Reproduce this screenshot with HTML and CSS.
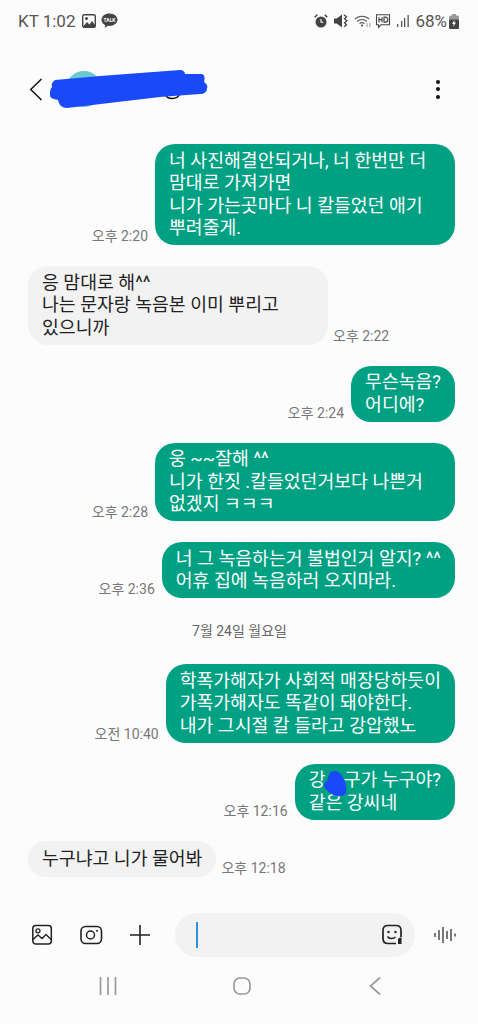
FILE: index.html
```html
<!DOCTYPE html>
<html lang="ko">
<head>
  <meta charset="UTF-8" />
  <meta name="viewport" content="width=device-width, initial-scale=1.0"/>
  <title>메시지</title>
  <link rel="stylesheet" href="styles.css">
</head>
<body>
  <div class="screen">
    <div class="status-bar">
      <div class="status-left">
        <span class="carrier">KT 1:02</span>
        <svg class="ic" width="14" height="14" viewBox="0 0 14 14"><rect x="0.7" y="0.7" width="12.6" height="12.6" rx="1.5" fill="#fff" stroke="#444" stroke-width="1.4"/><circle cx="4.5" cy="4.6" r="1.5" fill="#444"/><path d="M1 12.500 5 8l2.500 2.400L10 7l3 4v2.500H1z" fill="#444"/></svg>
        <svg class="ic talk" width="17" height="16" viewBox="0 0 17 16"><path d="M8.500 0.500C4 0.500 0.500 3.200 0.500 6.800c0 2.400 1.500 4.300 3.800 5.400L3.600 15l3.400-2.200c.5.100 1 .100 1.500.100 4.500 0 8-2.700 8-6.100S13 .5 8.500.5z" fill="#444"/><text x="8.500" y="8.500" text-anchor="middle" font-size="5" font-family="Roboto, sans-serif" font-weight="700" fill="#fff">TALK</text></svg>
      </div>
      <div class="status-right">
        <svg class="ic" width="14" height="14" viewBox="0 0 14 14"><circle cx="7" cy="8" r="5.500" fill="#444"/><path d="M7 5v3.300h2.400" fill="none" stroke="#fff" stroke-width="1.100"/><path d="M.8 3.200 3.200.8M13.200 3.200 10.800.8" stroke="#444" stroke-width="1.600"/></svg>
        <svg class="ic ic-mute" width="14" height="14" viewBox="0 0 14 14"><path d="M0 4.500h2.800L8 .5v13L2.800 9.500H0z" fill="#444"/><path d="M10 .8l2.500 2-2 2 2.500 2-2.500 2 2 2-2.500 2" fill="none" stroke="#444" stroke-width="1.300"/></svg>
        <svg class="ic ic-wifi" width="18" height="14" viewBox="0 0 18 14"><g fill="none" stroke="#555" stroke-width="1.100"><path d="M.8 5.200C4.800 1.200 11.200 1.200 15.200 5.200"/><path d="M3.200 7.500C6 4.900 10 4.900 12.800 7.500"/><path d="M5.500 9.700C7 8.400 9 8.400 10.500 9.700"/></g><circle cx="8" cy="11.500" r="1.100" fill="#555"/><path d="M13 9v4M15.800 13V9" stroke="#999" stroke-width="1"/></svg>
        <svg class="ic ic-hd" width="16" height="15" viewBox="0 0 16 15"><path d="M1.500 .8h13v10H6l-2.500 2.500v-2.500h-2z" fill="none" stroke="#444" stroke-width="1.100"/><path d="M4 3.200v5M4 5.700h3M7 3.200v5M9 3.200v5h1.500c3 0 3-5 0-5z" fill="none" stroke="#444" stroke-width="1.200"/></svg>
        <svg class="ic ic-signal" width="13" height="14" viewBox="0 0 13 14"><path d="M1 10v3h1.300v-3zM5 7v6h1.300V7zM8 4v9h1.300V4zM11.500 1v12h1.300V1z" fill="#555"/></svg>
        <span class="battery-pct">68%</span>
        <svg class="ic" width="10" height="15" viewBox="0 0 10 15"><rect x="3" y="0" width="4" height="2" fill="#999"/><rect x="0" y="1.500" width="10" height="13.500" rx="1.500" fill="#999"/><rect x="0" y="5.500" width="10" height="9.500" rx="1.500" fill="#444"/><path d="M5.800 5.500 3 10h1.800l-.6 3L7 8.500H5.200z" fill="#fff"/></svg>
      </div>
    </div>

    <div class="header">
      <svg class="back" width="14" height="23" viewBox="0 0 14 23"><path d="M12.500 1 1.700 11.500 12.500 22" fill="none" stroke="#111" stroke-width="1.500"/></svg>
      <div class="avatar"></div>
      <div class="contact-name"></div>
      <div class="more"><span></span><span></span><span></span></div>
      <svg class="scribble" width="160" height="40" viewBox="0 0 160 40"><path d="M116 25c2 6 12 6 15 0" fill="none" stroke="#111" stroke-width="1.500"/><path d="M6 11 51 7l80-6c3 0 5 2 5 4h17c3 1 3 5 2 8 3 2 4 5 3 6 0 4-3 6-7 6l-40 3-93 11c-5 0-8-3-9-8-5-1-8-2-8-5 0-3 0-6 2-8-1-2 0-5 3-7z" fill="#1a49fa"/></svg>
    </div>

    <div class="messages">
      <div class="row sent">
        <span class="time">오후 2:20</span>
        <div class="bubble wide">너 사진해결안되거나, 너 한번만 더<br>맘대로 가져가면<br>니가 가는곳마다 니 칼들었던 애기<br>뿌려줄게.</div>
      </div>
      <div class="row received">
        <div class="bubble wide">응 맘대로 해^^<br>나는 문자랑 녹음본 이미 뿌리고<br>있으니까</div>
        <span class="time">오후 2:22</span>
      </div>
      <div class="row sent">
        <span class="time">오후 2:24</span>
        <div class="bubble">무슨녹음?<br>어디에?</div>
      </div>
      <div class="row sent">
        <span class="time">오후 2:28</span>
        <div class="bubble wide">웅 ~~잘해 ^^<br>니가 한짓 .칼들었던거보다 나쁜거<br>없겠지 ㅋㅋㅋ</div>
      </div>
      <div class="row sent">
        <span class="time">오후 2:36</span>
        <div class="bubble">너 그 녹음하는거 불법인거 알지? ^^<br>어휴 집에 녹음하러 오지마라.</div>
      </div>
      <div class="date">7월 24일 월요일</div>
      <div class="row sent">
        <span class="time">오전 10:40</span>
        <div class="bubble">학폭가해자가 사회적 매장당하듯이<br>가폭가해자도 똑같이 돼야한다.<br>내가 그시절 칼 들라고 강압했노</div>
      </div>
      <div class="row sent">
        <span class="time">오후 12:16</span>
        <div class="bubble blotted">강　구가 누구야?<br>같은 강씨네
          <svg class="blot" width="24" height="26" viewBox="0 0 24 26"><path d="M11 0c6 0 9 5 11 11 2 6 3 13-4 14-6 1-10-2-14-6C0 16 0 12 4 10 6 4 7 0 11 0z" fill="#1a49fa"/></svg>
        </div>
      </div>
      <div class="row received">
        <div class="bubble short">누구냐고 니가 물어봐</div>
        <span class="time">오후 12:18</span>
      </div>
    </div>

    <div class="composer">
      <svg class="tool" width="22" height="22" viewBox="0 0 22 22"><rect x="1.800" y="1.500" width="18.500" height="18.500" rx="3" fill="none" stroke="#222" stroke-width="1.500"/><circle cx="7" cy="6.800" r="2" fill="none" stroke="#222" stroke-width="1.300"/><path d="M2 15.500 7 11l4 3.500 4-4 5 5" fill="none" stroke="#222" stroke-width="1.400"/></svg>
      <svg class="tool tool-camera" width="24" height="20" viewBox="0 0 24 20"><rect x="2" y="1.500" width="20.500" height="17" rx="4.500" fill="none" stroke="#222" stroke-width="1.600"/><circle cx="11.500" cy="10" r="4" fill="none" stroke="#222" stroke-width="1.500"/><circle cx="18" cy="5.800" r="1" fill="#222"/></svg>
      <svg class="tool tool-plus" width="20" height="20" viewBox="0 0 20 20"><path d="M10 0v20M0 10h20" stroke="#222" stroke-width="1.600"/></svg>
      <div class="input">
        <span class="caret"></span>
        <svg width="22" height="22" viewBox="0 0 22 22"><path d="M20 13V6.500C20 3.500 18 1.500 15 1.500H7C4 1.500 2 3.500 2 6.500v8C2 17.500 4 19.500 7 19.500h8" fill="none" stroke="#222" stroke-width="1.700"/><circle cx="7.500" cy="8" r="1.200" fill="#222"/><circle cx="14.500" cy="8" r="1.200" fill="#222"/><path d="M6.500 12.500c1.500 2.500 6 2.700 8 .5" fill="none" stroke="#222" stroke-width="1.500"/><path d="M17 20v-5l2-1.500h1.500V20z" fill="#222"/></svg>
      </div>
      <svg class="tool tool-voice" width="22" height="20" viewBox="0 0 22 20"><path d="M1 8v4M5 5v10M9 2v16M13 6v8M17 4v12M21 8.500v3" stroke="#222" stroke-width="1.200"/></svg>
    </div>

    <div class="nav">
      <svg width="18" height="18" viewBox="0 0 18 18"><path d="M1.500 0v18M9 0v18M16.500 0v18" stroke="#999" stroke-width="1.700"/></svg>
      <svg class="nav-home" width="18" height="18" viewBox="0 0 18 18"><rect x="1" y="1" width="16" height="16" rx="6" fill="none" stroke="#999" stroke-width="1.700"/></svg>
      <svg width="12" height="18" viewBox="0 0 12 18"><path d="M11 .5 1.500 9 11 17.500" fill="none" stroke="#999" stroke-width="1.700"/></svg>
    </div>
  </div>
</body>
</html>
```
FILE: styles.css
```css
body {
  font-family: Roboto, "Noto Sans CJK KR", sans-serif;
  margin: 0;
  padding: 0;
  background-color: #fcfcfc;
  color: #222;
}

svg {
  display: block;
  flex-shrink: 0;
}

.screen {
  width: 478px;
  height: 1024px;
  display: flex;
  flex-direction: column;
  overflow: hidden;
}

.status-bar {
  height: 42px;
  padding: 0 19px 0 18px;
  box-sizing: border-box;
  display: flex;
  justify-content: space-between;
  align-items: center;
  color: #555;
  font-size: 17px;
}

.status-left,
.status-right {
  display: flex;
  align-items: center;
}

.carrier {
  margin-right: 7px;
}

.talk {
  margin-left: 5px;
}

.ic-mute {
  margin-left: 6px;
}

.ic-wifi {
  margin-left: 6px;
}

.ic-hd {
  margin-left: 3px;
}

.ic-signal {
  margin-left: 5px;
}

.battery-pct {
  margin-left: 6px;
  margin-right: 2px;
}

.header {
  height: 80px;
  padding: 14px 38px 0 29px;
  box-sizing: border-box;
  display: flex;
  align-items: center;
  position: relative;
}

.avatar {
  width: 36px;
  height: 36px;
  border-radius: 50%;
  background-color: #68c8d0;
  margin-left: 23px;
}

.contact-name {
  flex: 1;
}

.more {
  display: flex;
  flex-direction: column;
  gap: 3.500px;
}

.more span {
  width: 4px;
  height: 4px;
  border-radius: 50%;
  background-color: #111;
}

.scribble {
  position: absolute;
  left: 49px;
  top: 27px;
}

.messages {
  flex: 1;
  padding: 22px 23px 0 28px;
  display: flex;
  flex-direction: column;
  gap: 21px;
}

.row {
  display: flex;
  align-items: flex-end;
  gap: 7px;
}

.sent {
  justify-content: flex-end;
}

.received {
  gap: 5px;
}

.bubble {
  padding: 5.500px 14px;
  font-size: 18.300px;
  line-height: 22.500px;
  border-radius: 20px;
  white-space: nowrap;
}

.sent .bubble {
  background-color: #00a183;
  color: #fff;
}

.received .bubble {
  background-color: #f2f2f3;
  color: #222;
}

.bubble.wide {
  width: 300px;
  box-sizing: border-box;
}

.received .short {
  padding: 7px 14px;
}

.time {
  font-size: 14px;
  line-height: 17px;
  color: #777;
}

.date {
  text-align: center;
  font-size: 14px;
  line-height: 20px;
  color: #666;
  margin: 2px 4px 2px 0;
}

.blotted {
  position: relative;
}

.blot {
  position: absolute;
  left: 28px;
  top: 7px;
}

.composer {
  height: 44px;
  padding: 0 22px 0 31px;
  display: flex;
  align-items: center;
  margin-bottom: 20px;
}

.tool-camera {
  margin-left: 26px;
}

.tool-plus {
  margin-left: 27px;
}

.input {
  width: 240px;
  height: 44px;
  box-sizing: border-box;
  margin-left: 25px;
  padding: 0 12px 0 21px;
  background-color: #f2f2f3;
  border-radius: 22px;
  display: flex;
  justify-content: space-between;
  align-items: center;
}

.caret {
  width: 2px;
  height: 26px;
  background-color: #2f8fe0;
}

.tool-voice {
  margin-left: 19px;
}

.nav {
  height: 47px;
  padding: 0 97px 0 99px;
  display: flex;
  justify-content: space-between;
  align-items: flex-start;
}

.nav-home {
  margin-left: -2px;
}
```
